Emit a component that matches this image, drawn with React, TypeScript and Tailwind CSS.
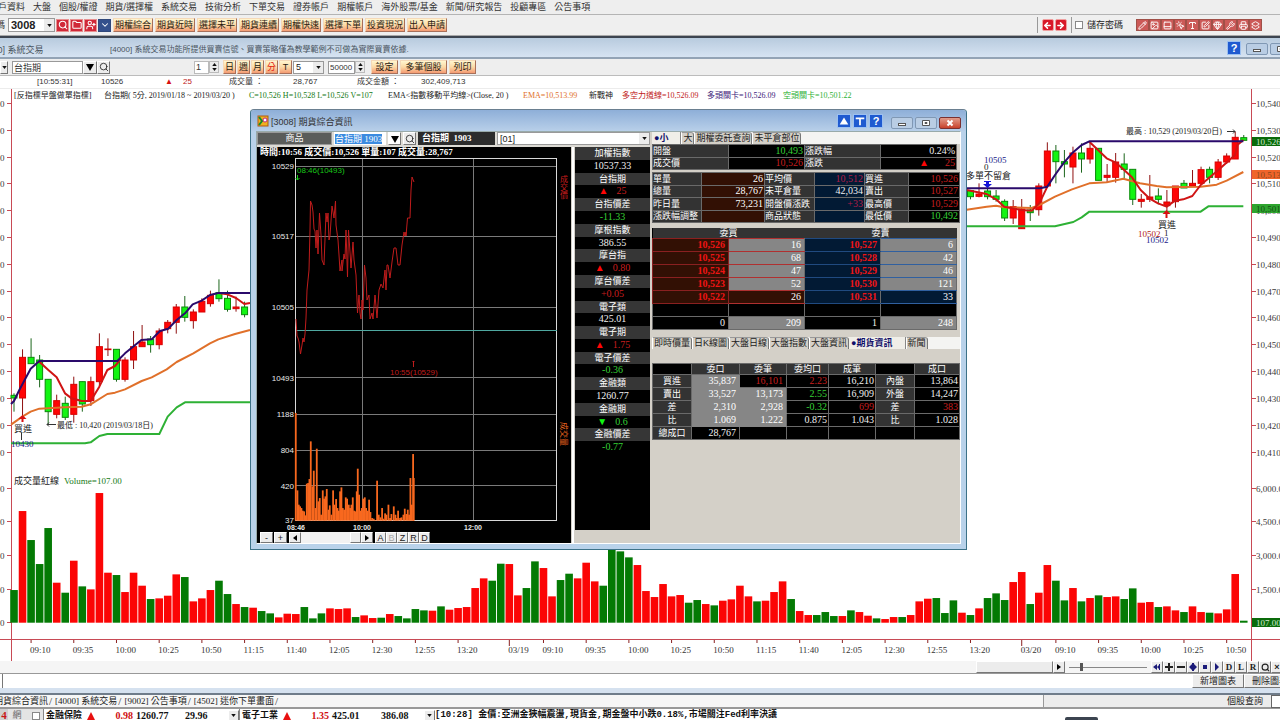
import type { ReactNode } from "react";
import {
    ChevronDown,
    ArrowLeft,
    ArrowRight,
    Folder,
    Gem,
    Image as ImageIcon,
    Layers2,
    MousePointerClick,
    PanelBottom,
    Pencil,
    Printer,
    Search,
    SquarePen,
    Type,
    UserPlus,
    Wrench,
} from "lucide-react";

const MENU = [
    "戶資料", "大盤", "個股/權證", "期貨/選擇權", "系統交易", "技術分析", "下單交易",
    "證券帳戶", "期權帳戶", "海外股票/基金", "新聞/研究報告", "投顧專區", "公告事項",
];

const QUICK = ["期權綜合", "期貨近時", "選擇未平", "期貨連續", "期權快速", "選擇下單", "投資現況", "出入申請"];

const TOOL_ICONS = [Pencil, ImageIcon, PanelBottom, MousePointerClick, Type, SquarePen, Gem, Wrench, Printer, Layers2];

// one bar every BAR_STEP px, first one centred on BAR_X0
const BAR_X0 = 14;
const BAR_STEP = 8.54;
const VOLUME_BASE = 622.7;
const barX = (k: number) => BAR_X0 + BAR_STEP * k;

// volume per bar in thirds of a pixel; positive closes up, negative closes down
const VOLUMES = [
    -98, 335, -248, -176, -284, 120, -90, 186, -109, 100, 389, 150, -143, 92, 150, 111, -71, 73, 81, 145,
    -137, 64, 73, 98, -126, -86, 56, -47, 45, -35, -28, 16, 27, 26, -47, -13, -28, 43, 41, 43,
    -17, 22, 14, -15, 26, -20, -13, -41, -37, 36, -49, 39, 44, 47, 104, 133, -126, -177, 176, 82,
    -104, -184, 164, 79, -128, -147, 133, 180, 124, -111, -220, -214, -196, 173, 95, 77, 116, 79, 83, -60,
    -68, 56, -52, 66, 70, 111, 79, -64, 66, 92, 124, -71, 35, 23, -23, -32, -20, 20, -37, 32,
    21, -13, 11, 17, -17, 23, 64, 72, -74, -29, -67, 30, -23, 43, -74, -88, -68, 122, 152, -56,
    90, 173, -126, -67, 104, -64, 74, -82, 77, 79, -71, -103, 60, 62, -47, 49, 37, -32, 49, 32,
    -30, 28, 40, 146, -6,
];

type Candle = [k: number, up: 0 | 1, high: number, top: number, bottom: number, low: number];

const CANDLES_LEFT: Candle[] = [
    [0, 0, 370, 376, 384, 425], [1, 1, 238, 262, 384, 440], [2, 0, 205, 262, 281, 281],
    [3, 0, 255, 270, 328, 352], [4, 0, 328, 328, 425, 462], [5, 1, 374, 392, 433, 445],
    [6, 0, 380, 400, 442, 450], [7, 1, 320, 343, 433, 458], [8, 0, 335, 335, 402, 425],
    [9, 1, 320, 335, 392, 408], [10, 1, 190, 230, 335, 350], [11, 1, 205, 237, 239, 258],
    [12, 0, 238, 238, 328, 335], [13, 1, 262, 270, 328, 335], [14, 1, 183, 230, 270, 297],
    [15, 1, 165, 216, 230, 230], [16, 0, 198, 207, 224, 248], [17, 1, 175, 183, 224, 238],
    [18, 1, 150, 157, 176, 190], [19, 1, 102, 111, 157, 191], [20, 0, 78, 111, 142, 155],
    [21, 1, 118, 126, 152, 176], [22, 1, 85, 94, 126, 126], [23, 1, 62, 76, 101, 110],
    [24, 0, 28, 68, 86, 95], [25, 0, 62, 85, 118, 125], [26, 1, 80, 111, 116, 125],
    [27, 0, 95, 111, 134, 142],
];

const CANDLES_RIGHT: Candle[] = [
    [112, 0, 300, 302, 320, 328], [113, 1, 280, 312, 319, 322], [114, 0, 288, 303, 320, 328],
    [115, 0, 300, 318, 328, 335], [116, 0, 328, 334, 384, 393], [117, 1, 330, 350, 384, 402],
    [118, 1, 327, 357, 416, 416], [119, 0, 345, 360, 368, 393], [120, 1, 280, 288, 359, 377],
    [121, 1, 157, 183, 288, 288], [122, 0, 165, 183, 215, 280], [123, 0, 180, 215, 222, 262],
    [124, 1, 170, 189, 231, 280], [125, 0, 160, 189, 207, 248], [126, 1, 155, 175, 207, 221],
    [127, 0, 175, 175, 271, 271], [128, 1, 222, 256, 262, 278], [129, 1, 189, 216, 262, 278],
    [130, 0, 190, 222, 238, 268], [131, 0, 238, 238, 328, 345], [132, 1, 312, 328, 334, 353],
    [133, 1, 255, 321, 328, 336], [134, 0, 295, 318, 328, 343], [135, 1, 300, 336, 347, 366],
    [136, 1, 288, 288, 335, 353], [137, 0, 270, 280, 294, 294], [138, 1, 240, 280, 288, 290],
    [139, 1, 230, 239, 280, 280], [140, 0, 230, 238, 262, 280], [141, 1, 207, 216, 262, 270],
    [142, 1, 190, 198, 216, 222], [143, 1, 125, 142, 207, 207], [144, 0, 135, 143, 151, 151],
];

const LINES_LEFT = [
    { color: "#e0702a", pts: "33,464 67,440 92,425 118,416 195,412 245,410 272,403 322,372 345,368 375,358 425,333 455,322 500,298 530,276 580,250 630,220 655,208 705,192 750,180" },
    { color: "#2eb135", pts: "33,520 255,520 272,517 298,498 322,492 478,492 503,440 530,412 555,397 750,397" },
    { color: "#d01414", pts: "118,275 145,300 170,322 195,370 215,385 245,393 272,393 298,350 322,300 345,288 362,268" },
    { color: "#d01414", pts: "655,69 682,73 708,84 733,102 750,99" },
    { color: "#2a0a6b", pts: "33,402 42,393 58,360 92,296 118,273 352,273 375,250 424,210 455,208 480,183 505,176 530,150 555,130 578,103 605,92 630,75 655,69 750,69" },
];

const LINES_RIGHT = [
    { color: "#e0702a", pts: "20,359 80,350 108,347 133,352 215,354 238,345 285,320 336,298 388,280 440,277 490,266 540,280 590,288 620,292 722,290 770,284 800,272 850,246" },
    { color: "#2eb135", pts: "20,409 285,409 340,396 365,382 388,365 722,365 745,349 850,349" },
    { color: "#d01414", pts: "20,300 80,312 108,328 133,350 185,360 215,362 238,340 262,290" },
    { color: "#d01414", pts: "388,155 414,180 440,205 466,217 490,238 516,262 542,300 568,325 594,340 620,350 645,332 670,328 697,318 722,285 775,240 825,195 832,165 850,150" },
    { color: "#2a0a6b", pts: "20,295 240,295 262,290 285,255 310,220 336,190 365,165 388,154 850,154" },
];

const PRICE_TICKS: [string, number][] = [
    ["10,540", 103], ["10,530", 130], ["10,520", 157], ["10,510", 183], ["10,500", 210], ["10,490", 237],
    ["10,480", 264], ["10,470", 291], ["10,460", 317], ["10,450", 344], ["10,440", 371], ["10,430", 398],
    ["10,420", 425], ["10,410", 452], ["6,000.0", 488], ["4,500.0", 521], ["3,000.0", 555],
    ["1,500.0", 589],
];

const CLOCK = ["09:10", "09:35", "10:00", "10:25", "10:50", "11:15", "11:40", "12:05", "12:30", "12:55", "13:20"];
const TIME_TICKS: [string, number][] = [
    ...CLOCK.map((t, i): [string, number] => [t, 2 + 5 * i]),
    ["03/19", 58],
    ...CLOCK.map((t, i): [string, number] => [t, 62 + 5 * i]),
    ["03/20", 118],
    ...CLOCK.slice(0, 5).map((t, i): [string, number] => [t, 122 + 5 * i]),
];

const INTRADAY =
    "296,319 297,336 298,338 299,342 300.5,354 302,345 303,338 304,342 305,334 306,318 307,290 309,270 310,230 310.5,201 312,205 313,212 314,229 315,231 316,248 317,230 318,254 319.5,213 321,235 322,260 324,265 326,213 327,222 328,213 329,240 330,236 332,206 334,218 335.5,201 336,225 338,240 339,255 340,271 342,260 342,271 344,254 345,259 346,230 347.5,277 348.5,230 350,252 351,268 353,242 354,260 356,275 357.5,313 359,295 360,313 361,319 362,300 363,310 364.5,265 366,278 367,300 369,295 370,319 372,313 373,319 375,295 377,318 379,290 381,284 383,288 385,270 386,290 387,265 388,265 390,278 392,262 394,248 396,248 398,265 400,265 402,245 404,232 405,236 406,232 406,236 407.5,218 410,218 411,190 412,177 414,182";

// [x offset, height] in thirds of a pixel
const INTRADAY_VOLUME: [number, number][] = [
    [137, 323], [142, 91], [146, 48], [150, 43], [154, 38], [158, 30], [162, 28], [166, 16], [170, 111],
    [174, 113], [178, 125], [182, 238], [187, 103], [191, 150], [196, 38], [200, 216], [205, 58], [209, 68],
    [213, 18], [218, 91], [222, 66], [226, 73], [230, 95], [235, 33], [239, 46], [244, 18], [249, 91],
    [253, 48], [258, 65], [262, 38], [266, 30], [270, 88], [274, 100], [278, 38], [282, 33], [287, 70],
    [291, 66], [296, 48], [300, 38], [304, 48], [308, 70], [312, 30], [317, 28], [320, 88], [323, 156],
    [327, 78], [331, 30], [335, 38], [339, 66], [344, 70], [348, 38], [353, 30], [357, 63], [361, 26],
    [366, 8], [371, 6], [375, 2], [381, 120], [386, 18], [391, 10], [396, 38], [400, 6], [405, 22],
    [409, 18], [415, 48], [420, 8], [424, 20], [431, 43], [436, 18], [440, 8], [444, 30], [450, 8],
    [454, 10], [460, 18], [464, 36], [469, 20], [473, 33], [477, 18], [481, 128], [485, 48], [489, 200],
    [491, 128],
];

const RED = "text-[#c81e1e]";
const GREEN = "text-[#35d135]";
const WHITE = "text-[#f0f0f0]";

const INDEXES: [string, string, string, string?][] = [
    ["加權指數", "10537.33", WHITE],
    ["台指期", "25", RED, "▲"],
    ["台指價差", "-11.33", GREEN],
    ["摩根指數", "386.55", WHITE],
    ["摩台指", "0.80", RED, "▲"],
    ["摩台價差", "+0.05", RED],
    ["電子類", "425.01", WHITE],
    ["電子期", "1.75", RED, "▲"],
    ["電子價差", "-0.36", GREEN],
    ["金融類", "1260.77", WHITE],
    ["金融期", "0.6", GREEN, "▼"],
    ["金融價差", "-0.77", GREEN],
];

const DEPTH = [
    ["10,526", "16", "10,527", "6"],
    ["10,525", "68", "10,528", "42"],
    ["10,524", "47", "10,529", "46"],
    ["10,523", "52", "10,530", "121"],
    ["10,522", "26", "10,531", "33"],
];

function OrangeButton({ children, className = "" }: { children: ReactNode; className?: string }) {
    return (
        <button
            type="button"
            className={`h-[14px] shrink-0 border border-t-[#f5d9b8] border-l-[#f5d9b8] border-r-[#a8705a] border-b-[#a8705a] bg-gradient-to-b from-[#fff6cf] via-[#fbd9a6] to-[#f39a72] text-center text-[9px] leading-[11px] whitespace-nowrap text-[#2a1a10] ${className}`}
        >
            {children}
        </button>
    );
}

function GrayButton({ children, className = "", label }: { children: ReactNode; className?: string; label?: string }) {
    return (
        <button
            type="button"
            aria-label={label}
            className={`flex shrink-0 items-center justify-center border border-t-white border-l-white border-r-[#777] border-b-[#777] bg-[#ececec] text-[9px] leading-[10px] whitespace-nowrap text-[#222] ${className}`}
        >
            {children}
        </button>
    );
}

function Combo({ label, value, className = "", bold = false }: { label: string; value: string; className?: string; bold?: boolean }) {
    return (
        <div className={`relative shrink-0 border border-[#999] bg-white ${className}`}>
            <select
                aria-label={label}
                className={`block h-full w-full appearance-none pl-[2px] leading-[10px] text-[#222] outline-none ${bold ? "text-[11px] font-bold" : "text-[9px]"}`}
            >
                <option>{value}</option>
            </select>
            <span className="pointer-events-none absolute inset-y-0 right-0 flex w-[10px] items-center justify-center bg-[#ececec]">
                <Caret />
            </span>
        </div>
    );
}

function Caret() {
    return (
        <svg viewBox="0 0 6 4" className="h-[3px] w-[5px]">
            <path d="M0 0h6L3 4z" fill="#111" />
        </svg>
    );
}

function Spinner() {
    return (
        <span className="flex h-[12px] w-[10px] shrink-0 flex-col items-center justify-center gap-[2px] border border-[#bbb] bg-[#ececec]">
            <svg viewBox="0 0 6 4" className="h-[3px] w-[5px]">
                <path d="M0 4h6L3 0z" fill="#111" />
            </svg>
            <Caret />
        </span>
    );
}

function Candles({ data, y0 }: { data: Candle[]; y0: number }) {
    return (
        <>
            {data.map(([k, up, high, top, bottom, low]) => {
                const x = barX(k);
                return (
                    <g key={k} stroke={up ? "#8f1010" : "#1c661c"} strokeWidth={1}>
                        <line x1={x} x2={x} y1={y0 + high / 3} y2={y0 + low / 3} />
                        <rect
                            x={x - 3}
                            y={y0 + top / 3}
                            width={6}
                            height={(bottom - top) / 3}
                            fill={up ? "#ff0505" : "#12f512"}
                            stroke={up ? "#d80000" : "#0a8a0a"}
                        />
                    </g>
                );
            })}
        </>
    );
}

function Lines({ data, x0, y0 }: { data: typeof LINES_LEFT; x0: number; y0: number }) {
    return (
        <g transform={`translate(${x0} ${y0}) scale(0.33333)`} fill="none" strokeWidth={6} strokeLinejoin="round">
            {data.map((l, i) => (
                <polyline key={i} points={l.pts} stroke={l.color} />
            ))}
        </g>
    );
}

function MainChart() {
    return (
        <svg
            viewBox="0 89 1280 572"
            className="block h-full w-full font-[family-name:'Liberation_Serif','Noto_Sans_CJK_TC',serif] text-[9px]"
        >
            <g stroke="#c84a55" strokeWidth={1}>
                <line x1={11.5} x2={11.5} y1={89} y2={661} />
                <line x1={1251.5} x2={1251.5} y1={89} y2={661} />
                <line x1={0} x2={1280} y1={639.5} y2={639.5} />
                {PRICE_TICKS.map(([t, y]) => (
                    <path key={t} d={`M7 ${y + 0.5}h4M1252 ${y + 0.5}h4`} />
                ))}
                <path d="M7 622.5h4" />
            </g>
            {PRICE_TICKS.map(([t, y]) => (
                <g key={t} fill="#3a3a3a">
                    <text x={1256} y={y + 4}>{t}</text>
                    <text x={0} y={y + 4}>0</text>
                </g>
            ))}
            <text x={0} y={626} fill="#3a3a3a">0</text>
            {[
                ["10,526", 141, "#0a6b0a", "#d0e8d0"],
                ["10,513", 174, "#f0642a", "#8a4a20"],
                ["10,501", 208, "#2fa52f", "#145014"],
                ["107.00", 622, "#0a6b0a", "#d0e8d0"],
            ].map(([t, y, bg, fg]) => (
                <g key={t}>
                    <rect x={1252} y={Number(y) - 4} width={28} height={9} fill={String(bg)} />
                    <text x={1256} y={Number(y) + 4} fill={String(fg)}>{t}</text>
                </g>
            ))}

            {VOLUMES.map((v, k) => (
                <rect
                    key={k}
                    x={barX(k) - 3.8}
                    y={VOLUME_BASE - Math.abs(v) / 3}
                    width={7.6}
                    height={Math.abs(v) / 3}
                    fill={v > 0 ? "#fb0505" : "#047a04"}
                />
            ))}

            {TIME_TICKS.map(([t, k]) => (
                <g key={k}>
                    <line x1={barX(k)} x2={barX(k)} y1={640} y2={t.includes("/") ? 646 : 643} stroke="#8a2020" />
                    <text x={barX(k) - 1} y={653} fill="#333">{t}</text>
                </g>
            ))}

            <Candles data={CANDLES_LEFT} y0={270} />
            <Candles data={CANDLES_RIGHT} y0={90} />
            <Lines data={LINES_LEFT} x0={0} y0={270} />
            <Lines data={LINES_RIGHT} x0={960} y0={90} />

            <path d="M1227 131.500h8m-2-2l2 2-2 2M47 424.500h9m-9 0l2-2m-2 2l2 2" stroke="#333" fill="none" />
            <path d="M22.500 415l4 4h-3v3h-2v-3h-3z" fill="#d81010" />
            <path d="M1166.500 210l4 4h-3v4h-2v-4h-3z" fill="#d81010" />
            <path d="M984 181h7v1h-2v2h3l-4.500 4-4.500-4h3v-2h-2z" fill="#1414d8" />
            <line x1={21.5} x2={21.5} y1={433} y2={440} stroke="#333" />

            <g fill="#222">
                <text x={14} y={432}>買進</text>
                <text x={57} y={428} className="text-[8px]">最低 : 10,420 (2019/03/18日)</text>
                <text x={1126} y={134} className="text-[8px]">最高 : 10,529 (2019/03/20日)</text>
                <text x={966} y={179}>多單不留倉</text>
                <text x={984} y={170}>0</text>
                <text x={1158} y={228}>買進</text>
                <text x={1164} y={236}>1</text>
                <text x={14} y={484}>成交量紅線</text>
                <text x={64} y={484} fill="#157a15">Volume=107.00</text>
            </g>
            <g fill="#20208a">
                <text x={11} y={447}>10430</text>
                <text x={984} y={163}>10505</text>
                <text x={1146} y={243}>10502</text>
                <text x={1138} y={237} fill="#b02020">10502</text>
            </g>
        </svg>
    );
}

function ChartLegend() {
    return (
        <div className="absolute top-0 right-8 left-[14px] flex h-[14px] items-center font-[family-name:'Liberation_Serif','Noto_Sans_CJK_TC',serif] text-[8px] whitespace-pre text-[#222]">
            <span className="w-[90px]">[反指標早盤做單指標]</span>
            <span className="w-[145px]">台指期( 5分, 2019/01/18 ~ 2019/03/20 )</span>
            <span className="w-[139px] text-[#157a15]">C=10,526 H=10,528 L=10,526 V=107</span>
            <span className="w-[135px]">{"EMA<指數移動平均線>(Close, 20 )"}</span>
            <span className="w-[66px] text-[#e0702a]">EMA=10,513.99</span>
            <span className="w-[33px]">新戰神</span>
            <span className="w-[85px] text-[#c01818]">多空力道線=10,526.09</span>
            <span className="w-[76px] text-[#3a1878]">多頭關卡=10,526.09</span>
            <span className="text-[#2eb135]">空頭關卡=10,501.22</span>
        </div>
    );
}

function IntradayChart() {
    return (
        <svg viewBox="257 158 314 374" className="block h-[374px] w-full shrink-0 font-[family-name:'Liberation_Sans',sans-serif] text-[8px]">
            <g stroke="#7a7a7a" strokeWidth={1}>
                {[166.5, 236.5, 307.5, 377.5, 414.5, 450.5, 485.5].map((y) => (
                    <line key={y} x1={296} x2={557} y1={y} y2={y} />
                ))}
                <line x1={362.5} x2={362.5} y1={158} y2={521} />
                <line x1={473.5} x2={473.5} y1={158} y2={521} />
            </g>
            <rect x={295.5} y={158.5} width={261} height={362} fill="none" stroke="#d8d8d8" />
            <line x1={296} x2={557} y1={330.5} y2={330.5} stroke="#4fa8a0" />
            <polyline points={INTRADAY} fill="none" stroke="#c01c1c" strokeWidth={1} />
            {INTRADAY_VOLUME.map(([x, h]) => (
                <rect key={x} x={250 + x / 3 - 0.8} y={520.7 - h / 3} width={1.8} height={h / 3} fill="#f8681e" />
            ))}
            <g fill="#e8e8e8" textAnchor="end">
                {([["10529", 166], ["10517", 236], ["10505", 307], ["10493", 378], ["1188", 414], ["804", 450], ["420", 486], ["37", 520]] as [string, number][]).map(([t, y]) => (
                    <text key={t} x={294} y={y + 3}>{t}</text>
                ))}
            </g>
            <g fill="#e8e8e8" textAnchor="middle" className="text-[7px] font-bold">
                <text x={296} y={530}>08:46</text>
                <text x={362} y={530}>10:00</text>
                <text x={473} y={530}>12:00</text>
            </g>
            <text x={297} y={173} fill="#18c818">08:46(10493)</text>
            <path d="M297.500 175v5m-2-2l2 2 2-2" stroke="#18c818" fill="none" />
            <text x={390} y={375} fill="#c01c1c">10:55(10529)</text>
            <path d="M413.500 367v-6m-1 1l1-1 1 1" stroke="#c01c1c" fill="none" />
            <g fill="#c81e1e" className="font-[family-name:'Noto_Sans_CJK_TC',sans-serif] text-[8px]">
                <text x={560} y={182}>成</text>
                <text x={560} y={190}>交</text>
                <text x={560} y={198}>價</text>
                <text transform="translate(561 422) rotate(90)" fill="#e8641e">成交量</text>
            </g>
        </svg>
    );
}

function TabStrip({ tabs, active, className }: { tabs: string[]; active: number; className: string }) {
    return (
        <div role="tablist" className={`flex bg-[#f4f4f2] text-[9px] whitespace-nowrap ${className}`}>
            {tabs.map((t, i) => (
                <button
                    key={t}
                    type="button"
                    role="tab"
                    aria-selected={i === active}
                    className={
                        i === active
                            ? "border-r border-[#888] bg-[#f0eee8] pr-3 pl-[2px] leading-[12px] font-bold text-[#10106a]"
                            : "rounded-tr-[3px] border-t border-r border-l border-t-[#999] border-r-[#777] border-l-white bg-[#d4d0c8] px-px leading-[11px] text-[#222]"
                    }
                >
                    {i === active ? `●${t}` : t}
                </button>
            ))}
        </div>
    );
}

function Td({ children, className = "" }: { children?: ReactNode; className?: string }) {
    return (
        <td className={`border border-[#6a6a6a] p-0 px-px text-right font-[family-name:'Liberation_Serif',serif] text-[10px] leading-[10px] ${className}`}>
            {children}
        </td>
    );
}

function Th({ children, className = "text-left" }: { children?: ReactNode; className?: string }) {
    return (
        <th className={`overflow-hidden border border-[#6a6a6a] bg-[#333] p-0 text-[9px] leading-[10px] font-normal whitespace-nowrap text-white ${className}`}>
            {children}
        </th>
    );
}

function QuotePanel() {
    return (
        <div className="min-w-0 flex-1">
            <TabStrip tabs={["小", "大", "期權委託查詢", "未平倉部位"]} active={0} className="h-3" />
            <table className="h-[26px] w-[305px] table-fixed border-collapse bg-black">
                <tbody>
                    <tr>
                        <Th>開盤</Th>
                        <Td className={GREEN}>10,493</Td>
                        <Th>漲跌幅</Th>
                        <Td className={WHITE}>0.24%</Td>
                    </tr>
                    <tr>
                        <Th>成交價</Th>
                        <Td className={RED}>10,526</Td>
                        <Th>漲跌</Th>
                        <Td className={RED}>
                            <span className="mr-4 text-[#ff0505]">▲</span>25
                        </Td>
                    </tr>
                </tbody>
            </table>
            <table className="mt-[2px] h-[51px] w-full table-fixed border-collapse bg-black">
                <colgroup>
                    <col className="w-[49px]" />
                    <col className="w-[63px]" />
                    <col className="w-[50px]" />
                    <col className="w-[50px]" />
                    <col className="w-[44px]" />
                    <col />
                </colgroup>
                <tbody>
                    {[
                        ["單量", "26", "平均價", "10,512", "買進", "10,526"],
                        ["總量", "28,767", "未平倉量", "42,034", "賣出", "10,527"],
                        ["昨日量", "73,231", "開盤價漲跌", "+33", "最高價", "10,529"],
                        ["漲跌幅調整", "", "商品狀態", "", "最低價", "10,492"],
                    ].map((r, i) => (
                        <tr key={r[0]}>
                            <Th>{r[0]}</Th>
                            <Td className="bg-[#321004] text-white">{r[1]}</Td>
                            <Th>{r[2]}</Th>
                            <Td className={`bg-[#021a34] ${i === 1 ? WHITE : "text-[#b01c48]"}`}>{r[3]}</Td>
                            <Th>{r[4]}</Th>
                            <Td className={i === 3 ? GREEN : RED}>{r[5]}</Td>
                        </tr>
                    ))}
                </tbody>
            </table>
            <table className="mt-[5px] h-[102px] w-[305px] table-fixed border-collapse bg-black">
                <thead>
                    <tr>
                        <th colSpan={2} className="bg-[#333] p-0 text-[9px] leading-[10px] font-normal text-white">委買</th>
                        <th colSpan={2} className="bg-[#333] p-0 text-[9px] leading-[10px] font-normal text-white">委賣</th>
                    </tr>
                </thead>
                <tbody>
                    {DEPTH.map((r, i) => (
                        <tr key={r[0]}>
                            <Td className="border-x-[#8a2020] border-y-[#8a2020] bg-[#321004] pr-[3px] font-bold text-[#f01414]">{r[0]}</Td>
                            <Td className={`border-y-[#b03030] pr-[3px] text-white ${i === 4 ? "bg-[#321004]" : "bg-[#868686]"}`}>{r[1]}</Td>
                            <Td className="border-y-[#204a80] bg-[#021a34] pr-[3px] font-bold text-[#f01414]">{r[2]}</Td>
                            <Td className={`border-y-[#3060a0] pr-[3px] text-white ${i === 4 ? "bg-[#021a34]" : "bg-[#868686]"}`}>{r[3]}</Td>
                        </tr>
                    ))}
                    <tr>
                        <Td>&nbsp;</Td>
                        <Td />
                        <Td />
                        <Td />
                    </tr>
                    <tr>
                        <Td className={`pr-[3px] ${WHITE}`}>0</Td>
                        <Td className="bg-[#868686] pr-[3px] text-white">209</Td>
                        <Td className={`pr-[3px] ${WHITE}`}>1</Td>
                        <Td className="bg-[#868686] pr-[3px] text-white">248</Td>
                    </tr>
                </tbody>
            </table>
            <TabStrip
                tabs={["即時價量", "日K線圖", "大盤日線", "大盤指數", "大盤資訊", "期貨資訊", "新聞"]}
                active={5}
                className="mt-[7px] h-3"
            />
            <table className="mt-[14px] h-[77px] w-full table-fixed border-collapse bg-black">
                <colgroup>
                    <col className="w-[39px]" />
                    <col className="w-[48px]" />
                    <col className="w-[47px]" />
                    <col className="w-[42px]" />
                    <col className="w-[47px]" />
                    <col className="w-[39px]" />
                    <col />
                </colgroup>
                <thead>
                    <tr>
                        {["", "委口", "委筆", "委均口", "成筆", "", "成口"].map((h, i) => (
                            <Th key={i} className={`text-center ${h ? "" : "bg-black"}`}>{h}</Th>
                        ))}
                    </tr>
                </thead>
                <tbody>
                    {[
                        ["買進", "35,837", "16,101", "2.23", "16,210", "內盤", "13,864"],
                        ["賣出", "33,527", "13,173", "2.55", "16,909", "外盤", "14,247"],
                        ["差", "2,310", "2,928", "-0.32", "699", "差", "383"],
                        ["比", "1.069", "1.222", "0.875", "1.043", "比", "1.028"],
                    ].map((r, i) => (
                        <tr key={r[0]}>
                            <Th className="text-center">{r[0]}</Th>
                            <Td className="border-x-[#868686] border-y-[#868686] bg-[#868686] pr-[3px] text-white">{r[1]}</Td>
                            <Td className={`pr-[3px] ${i === 0 ? RED : "border-y-[#868686] bg-[#868686] text-white"}`}>{r[2]}</Td>
                            <Td className={[RED, GREEN, GREEN, WHITE][i]}>{r[3]}</Td>
                            <Td className={i === 2 ? RED : WHITE}>{r[4]}</Td>
                            <Th className="text-center">{r[5]}</Th>
                            <Td className={i === 2 ? RED : WHITE}>{r[6]}</Td>
                        </tr>
                    ))}
                    <tr>
                        <Th className="text-center">總成口</Th>
                        <Td className={`pr-[3px] ${WHITE}`}>28,767</Td>
                        <Td />
                        <Td />
                        <Td />
                        <Td />
                        <Td />
                    </tr>
                </tbody>
            </table>
        </div>
    );
}

function QuoteWindow() {
    return (
        <section className="absolute top-5 left-[250px] flex h-[441px] w-[717px] flex-col rounded-t-[4px] border border-[#3d7288] border-t-[#6a7f90] bg-[#b9d2ea]">
            <header className="flex h-[21px] shrink-0 items-center rounded-t-[4px] bg-gradient-to-b from-[#8eafd8] to-[#b8cfe9] pr-[5px] pl-[6px]">
                <svg viewBox="0 0 12 12" className="h-3 w-3">
                    <rect x="1" y="1" width="10" height="10" fill="#f0b020" stroke="#b05a10" />
                    <path d="M2 2l3 4-3 4" stroke="#1a8a2a" strokeWidth="2" fill="none" />
                    <circle cx="8" cy="5" r="2" fill="#fff" stroke="#c02080" />
                </svg>
                <h2 className="ml-[2px] flex-1 pt-[2px] text-[9px] leading-[12px] text-[#333]">[3008] 期貨綜合資訊</h2>
                <div className="flex gap-[2px]">
                    {["M7 3l5 8H2z", "M2 3h10v2H8v7H6V5H2z"].map((d, i) => (
                        <button key={d} type="button" aria-label={i ? "置頂" : "上移"} className="h-[14px] w-[14px] border border-[#9cc0f0] bg-[#1f5ad0]">
                            <svg viewBox="0 0 14 14" className="h-3 w-3">
                                <path d={d} fill="#fff" />
                            </svg>
                        </button>
                    ))}
                    <HelpButton />
                </div>
                <div className="ml-2 flex gap-[2px] pt-[4px]">
                    <WindowButton kind="min" />
                    <WindowButton kind="max" />
                    <WindowButton kind="close" />
                </div>
            </header>

            <div className="mx-[5px] mb-[5px] flex min-h-0 flex-1 gap-[2px] border border-[#9aa] border-r-white border-b-white bg-[#d4d0c8]">
                <div className="flex w-[393px] shrink-0 flex-col">
                    <div className="flex h-[15px] shrink-0 items-start gap-[2px] bg-[#dcdad4]">
                        <button type="button" className="h-[13px] w-[75px] border border-[#999] bg-[#5a5c5a] text-[9px] leading-[11px] text-white">
                            商品
                        </button>
                        <div className="flex h-[13px] w-[52px] items-center bg-white pl-px text-[9px] leading-[10px]">
                            <span className="bg-[#3b8be0] font-[family-name:'Liberation_Serif','Noto_Sans_CJK_TC',serif] whitespace-nowrap text-white">台指期 1903</span>
                        </div>
                        <GrayButton label="展開" className="h-[13px] w-[13px] bg-white">
                            <svg viewBox="0 0 8 8" className="h-2 w-2">
                                <path d="M0 1h8L4 8z" fill="#000" />
                            </svg>
                        </GrayButton>
                        <GrayButton label="查詢" className="h-[13px] w-[13px]">
                            <Search size={10} strokeWidth={2} />
                        </GrayButton>
                        <div className="h-[13px] w-[77px] bg-[#2c2c2c] pl-1 font-[family-name:'Liberation_Serif','Noto_Sans_CJK_TC',serif] text-[9px] leading-[13px] font-bold whitespace-nowrap text-white">
                            台指期&nbsp; 1903
                        </div>
                        <Combo label="帳號" value="[01]" className="h-[13px] flex-1" />
                    </div>
                    <div className="flex min-h-0 flex-1">
                        <div className="flex w-[314px] shrink-0 flex-col bg-black">
                            <div className="h-[11px] shrink-0 pl-[3px] font-[family-name:'Liberation_Serif','Noto_Sans_CJK_TC',serif] text-[9px] leading-[11px] font-bold whitespace-nowrap text-white">
                                時間:10:56 成交價:10,526 單量:107 成交量:28,767
                            </div>
                            <IntradayChart />
                            <div className="flex min-h-0 flex-1 overflow-hidden pl-[3px]">
                                <GrayButton className="w-[13px]">-</GrayButton>
                                <GrayButton className="ml-px w-[13px]">+</GrayButton>
                                <GrayButton label="向左" className="ml-[2px] w-3">
                                    <svg viewBox="0 0 4 6" className="h-[6px] w-1"><path d="M4 0v6L0 3z" /></svg>
                                </GrayButton>
                                <div className="flex w-[60px] justify-end bg-[#f2f2f2]">
                                    <span className="w-[11px] border border-t-white border-l-white border-r-[#777] border-b-[#777] bg-[#ececec]" />
                                </div>
                                <GrayButton label="向右" className="mr-[2px] w-3">
                                    <svg viewBox="0 0 4 6" className="h-[6px] w-1"><path d="M0 0v6l4-3z" /></svg>
                                </GrayButton>
                                {["A", "B", "Z", "R", "D"].map((c) => (
                                    <GrayButton key={c} className={`w-[11px] ${c === "B" ? "text-[#aaa]" : ""}`}>{c}</GrayButton>
                                ))}
                            </div>
                        </div>
                        <div className="mx-px w-[2px] bg-white" />
                        <div className="flex min-w-0 flex-1 flex-col">
                            <div className="h-[383px] bg-black">
                                <dl className="grid h-[307px] grid-rows-12">
                                    {INDEXES.map(([name, value, color, mark]) => (
                                        <div key={name} className="grid grid-rows-2 text-center">
                                            <dt className="bg-[#363636] text-[9px] leading-[12px] text-white">{name}</dt>
                                            <dd className={`font-[family-name:'Liberation_Serif',serif] text-[10px] leading-[12px] ${color}`}>
                                                {mark && <span className={`mr-2 ${mark === "▲" ? "text-[#ff0505]" : "text-[#12f512]"}`}>{mark}</span>}
                                                {value}
                                            </dd>
                                        </div>
                                    ))}
                                </dl>
                            </div>
                        </div>
                    </div>
                </div>
                <QuotePanel />
            </div>
        </section>
    );
}

function HelpButton() {
    return (
        <button type="button" aria-label="說明" className="h-[14px] w-[14px] shrink-0 border border-[#9cc0f0] bg-[#1f5ad0] text-center text-[11px] leading-[12px] font-bold text-white">
            ?
        </button>
    );
}

function WindowButton({ kind }: { kind: "min" | "max" | "close" }) {
    return (
        <button
            type="button"
            aria-label={kind}
            className={`flex h-[12px] w-[22px] shrink-0 items-center justify-center rounded-[2px] border ${kind === "close" ? "border-[#7a3030] bg-gradient-to-b from-[#e09a8a] to-[#c8402a]" : "border-[#8098b4] bg-[#b9cde4]"}`}
        >
            <svg viewBox="0 0 8 8" className="h-2 w-2" fill="#fff" stroke="#555" strokeWidth="1">
                {kind === "min" && <rect x="0.500" y="4.500" width="7" height="2" />}
                {kind === "max" && <path fillRule="evenodd" d="M.5 1.500h7v5h-7zM3 3.500h2v1H3z" />}
                {kind === "close" && <path d="M1.500 1.500l5 5m0-5l-5 5" stroke="#fff" strokeWidth="2" />}
            </svg>
        </button>
    );
}

function TickerItem({ name, change, last, amount }: { name: string; change: string; last: string; amount: string }) {
    return (
        <div className="flex w-[196px] shrink-0 items-center border-l border-[#888] bg-white pl-[2px]">
            <span className="w-[38px] font-bold">{name}</span>
            <svg viewBox="0 0 8 8" className="mx-[3px] h-2 w-2">
                <path d="M4 0l4 8H0z" fill="#e81010" />
            </svg>
            <span className="w-[35px] text-right text-[10px] font-bold text-[#d01010]">{change}</span>
            <span className="w-[36px] pl-[3px] text-[10px] font-bold">{last}</span>
            <span className="flex-1 pl-4 text-[10px] font-bold">{amount}</span>
            <GrayButton label="選擇類股" className="h-3 w-[11px]">
                <Caret />
            </GrayButton>
        </div>
    );
}

export default function App() {
    return (
        <div
            lang="zh-Hant"
            className="flex h-screen w-full flex-col overflow-hidden bg-white font-[family-name:'Liberation_Sans','Noto_Sans_CJK_TC',sans-serif] text-[9px] leading-[12px] text-[#333]"
        >
            <nav className="flex h-[15px] shrink-0 items-center gap-2 border-b border-[#b4b4b4] bg-[#eeeeee]">
                {MENU.map((m) => (
                    <a key={m} href="#" className="shrink-0 whitespace-nowrap text-[#333] first:-ml-[2px]">{m}</a>
                ))}
            </nav>

            <div className="flex h-[21px] shrink-0 items-center border-b border-[#a8a8a8] bg-[#efefef]">
                <span className="-ml-1 w-3 shrink-0">碼</span>
                <Combo label="代碼" value="3008" bold className="h-[14px] w-[47px]" />
                <div className="ml-px flex gap-px">
                    {[Search, Folder, UserPlus, ChevronDown].map((Icon, i) => (
                        <button
                            key={i}
                            type="button"
                            aria-label={["查詢", "開啟", "新增", "更多"][i]}
                            className={`flex h-[13px] w-[13px] items-center justify-center border text-white ${i === 3 ? "border-[#30487a] bg-[#34508c]" : "border-[#e89090] bg-[#d02838]"}`}
                        >
                            <Icon size={10} strokeWidth={2.5} />
                        </button>
                    ))}
                </div>
                <div className="ml-[2px] flex gap-[2px]">
                    {QUICK.map((q) => (
                        <OrangeButton key={q} className="w-[40px]">{q}</OrangeButton>
                    ))}
                </div>
                <div className="ml-auto flex items-center pr-[18px]">
                    <span className="mr-1 h-4 w-px bg-[#999]" />
                    {[ArrowLeft, ArrowRight].map((Icon, i) => (
                        <button key={i} type="button" aria-label={i ? "下一頁" : "上一頁"} className="mr-px flex h-3 w-3 items-center justify-center rounded-[2px] border border-[#f0a0a0] bg-[#d81828] text-white">
                            <Icon size={9} strokeWidth={4} />
                        </button>
                    ))}
                    <span className="mx-[3px] h-4 w-px bg-[#999]" />
                    <label className="flex items-center gap-1 text-[#222]">
                        <input type="checkbox" className="h-2 w-2 appearance-none border border-[#888] bg-white" />
                        儲存密碼
                    </label>
                    <div className="ml-[13px] flex w-[126px]">
                        {TOOL_ICONS.map((Icon, i) => (
                            <button key={i} type="button" aria-label={`工具 ${i + 1}`} className="flex h-3 flex-1 items-center justify-center border border-[#a05048] bg-[#cc5a58] text-white">
                                <Icon size={9} strokeWidth={2.5} />
                            </button>
                        ))}
                    </div>
                </div>
            </div>

            <header className="flex h-[23px] shrink-0 items-center overflow-hidden border-t-2 border-b-2 border-t-[#3c4450] border-b-[#93a3b5] bg-gradient-to-b from-[#b8cbde] to-[#d6e3f2] text-[#4a5560]">
                <h1 className="-ml-5 w-[130px] shrink-0 pt-1 text-[9px]">[4000] 系統交易</h1>
                <p className="pt-1 text-[8px] whitespace-nowrap">[4000] 系統交易功能所提供買賣信號、買賣策略僅為教學範例不可做為實際買賣依據.</p>
                <div className="ml-auto flex items-center gap-[2px]">
                    <HelpButton />
                    <span className="w-px" />
                    <div className="flex gap-[2px] pt-[2px]">
                        <WindowButton kind="min" />
                        <div className="w-[10px] overflow-hidden">
                            <WindowButton kind="max" />
                        </div>
                    </div>
                </div>
            </header>

            <div className="flex h-[17px] shrink-0 items-center border-b border-[#bcbcbc] bg-[#eeeeee]">
                <GrayButton label="商品類別" className="h-[13px] w-2">
                    <Caret />
                </GrayButton>
                <input aria-label="商品" defaultValue="台指期" className="ml-1 h-[13px] w-[71px] border border-[#999] bg-white pl-px" />
                <GrayButton label="展開" className="h-[13px] w-[14px]">
                    <svg viewBox="0 0 8 8" className="h-2 w-2"><path d="M0 1h8L4 8z" fill="#000" /></svg>
                </GrayButton>
                <GrayButton label="查詢" className="h-[13px] w-[13px]">
                    <Search size={10} />
                </GrayButton>
                <input aria-label="期數" defaultValue="1" className="ml-[84px] h-[13px] w-[15px] border border-[#bbb] bg-white pl-px" />
                <Spinner />
                <div className="ml-1 flex gap-px">
                    {["日", "週", "月", "分", "T"].map((p) => (
                        <OrangeButton key={p} className={`w-[13px] ${p === "分" ? "text-[#e02010]" : ""}`}>{p}</OrangeButton>
                    ))}
                </div>
                <Combo label="分鐘" value="5" className="ml-px h-[13px] w-[31px]" />
                <input aria-label="筆數" defaultValue="50000" className="ml-1 h-[13px] w-[27px] border border-[#999] bg-white pl-px text-[8px]" />
                <Spinner />
                <div className="ml-[6px] flex gap-[2px]">
                    <OrangeButton className="w-[27px]">設定</OrangeButton>
                    <OrangeButton className="w-[47px]">多筆個股</OrangeButton>
                    <OrangeButton className="w-[27px]">列印</OrangeButton>
                </div>
            </div>

            <div className="grid h-[13px] shrink-0 grid-cols-[64px_64px_18px_46px_64px_64px_64px_1fr] items-center border-b border-[#ececec] bg-white pl-[37px] text-[8px] whitespace-nowrap">
                <span>[10:55:31]</span>
                <span>10526</span>
                <span className="text-[#d81010]">▲</span>
                <span className="text-[#c02020]">25</span>
                <span>成交量 ：</span>
                <span>28,767</span>
                <span>成交金額 ：</span>
                <span>302,409,713</span>
            </div>

            <main className="relative min-h-0 flex-1 bg-white">
                <MainChart />
                <ChartLegend />
                <QuoteWindow />
            </main>

            <div className="flex h-[13px] shrink-0 items-center justify-end overflow-hidden border-b border-[#999] bg-[#f5f5f5]">
                <span className="h-3 w-[77px] border border-t-white border-l-white border-r-[#777] border-b-[#777] bg-[#ececec]" />
                <GrayButton label="向右捲動" className="h-3 w-3">
                    <svg viewBox="0 0 4 6" className="h-[6px] w-1"><path d="M0 0v6l4-3z" /></svg>
                </GrayButton>
                <input
                    type="range"
                    aria-label="縮放"
                    defaultValue={14}
                    className="mx-1 h-2 w-[78px] appearance-none bg-[linear-gradient(#888,#888)] bg-[length:100%_1px] bg-center bg-no-repeat [&::-webkit-slider-thumb]:h-2 [&::-webkit-slider-thumb]:w-[3px] [&::-webkit-slider-thumb]:appearance-none [&::-webkit-slider-thumb]:bg-[#555]"
                />
                <div className="flex w-[129px] overflow-hidden">
                    {["M0 4l4-3v6zM4 4l2-2v4zM6 1h1v6H6z", "M3 0h2v3h3v2H5v3H3V5H0V3h3z", "M0 3h8v2H0z", "M0 4l3-3v2h2V1l3 3-3 3V5H3v2zM3 0h2v8H3z", "M2 2h4v4H2z", "M2 0l4 4-4 4z"].map((d, i) => (
                        <GrayButton key={i} label={`導覽 ${i + 1}`} className="h-3 w-3">
                            <svg viewBox="0 0 8 8" className="h-2 w-2">
                                <path d={d} fill={i === 1 || i === 2 ? "#222" : "#1c1c7a"} />
                            </svg>
                        </GrayButton>
                    ))}
                    {["D", "L", "R"].map((c) => (
                        <GrayButton key={c} className="h-3 w-3 font-[family-name:'Liberation_Serif',serif] font-bold">{c}</GrayButton>
                    ))}
                    <GrayButton label="放大" className="h-3 w-3">
                        <Search size={9} strokeWidth={3} />
                    </GrayButton>
                    <GrayButton className="h-3 w-3 font-bold">×</GrayButton>
                </div>
            </div>

            <div className="flex h-[14px] shrink-0 items-stretch justify-between overflow-hidden bg-white">
                <span className="w-[3px] border-r border-[#777]" />
                <div className="flex">
                    <GrayButton className="w-[52px]">新增圖表</GrayButton>
                    <div className="w-9 overflow-hidden">
                        <GrayButton className="h-full w-[52px]">刪除圖表</GrayButton>
                    </div>
                </div>
            </div>
            <div className="h-[7px] shrink-0 border-b-2 border-[#6f7c8a] bg-[#d5e1ef]" />

            <div className="flex h-[14px] shrink-0 items-center border-b-2 border-[#999] bg-[#ececec] font-[family-name:'Liberation_Serif','Noto_Sans_CJK_TC',serif]">
                <div className="flex w-[1044px] items-center overflow-hidden border-r border-[#999] bg-[#f6f6f6] whitespace-nowrap">
                    <div className="-ml-[6px] flex gap-[3px]">
                        {["期貨綜合資訊", "[4000] 系統交易", "[9002] 公告事項", "[4502] 迷你下單畫面"].map((t) => (
                            <span key={t} className="flex">
                                <a href="#" className="text-[#222]">{t}</a>
                                <span className="pl-px text-[11px]">/</span>
                            </span>
                        ))}
                    </div>
                </div>
                <label htmlFor="stock" className="ml-auto pr-2 text-[#222]">個股查詢</label>
                <input id="stock" className="h-[13px] w-[9px] border border-r-0 border-[#666] bg-white" />
            </div>

            <footer className="relative flex h-[11px] shrink-0 items-start font-[family-name:'Liberation_Serif','Noto_Sans_CJK_TC',serif] leading-[13px] whitespace-nowrap text-[#111]">
                <div className="flex w-[43px] shrink-0 items-center gap-[3px] bg-[#e4e4e4]">
                    <span className="w-2 bg-[#d0d0d0] text-center text-[11px] font-bold text-[#c81818]">4</span>
                    <span className="w-3 text-center text-[#666]">網</span>
                    <input type="checkbox" aria-label="顯示" className="ml-[6px] h-2 w-2 appearance-none border border-[#888] bg-white" />
                </div>
                <TickerItem name="金融保險" change="0.98" last="1260.77" amount="29.96" />
                <TickerItem name="電子工業" change="1.35" last="425.01" amount="386.08" />
                <span className="font-[family-name:'Liberation_Mono','Noto_Sans_CJK_TC',monospace] font-bold">[10:28] 金價:亞洲金狹幅震盪,現貨金,期金盤中小跌0.18%,市場關注Fed利率決議</span>
                <span className="absolute right-[182px] bottom-0 h-[3px] w-[33px] rounded-t-[2px] bg-[#3c4450]" />
            </footer>
        </div>
    );
}
